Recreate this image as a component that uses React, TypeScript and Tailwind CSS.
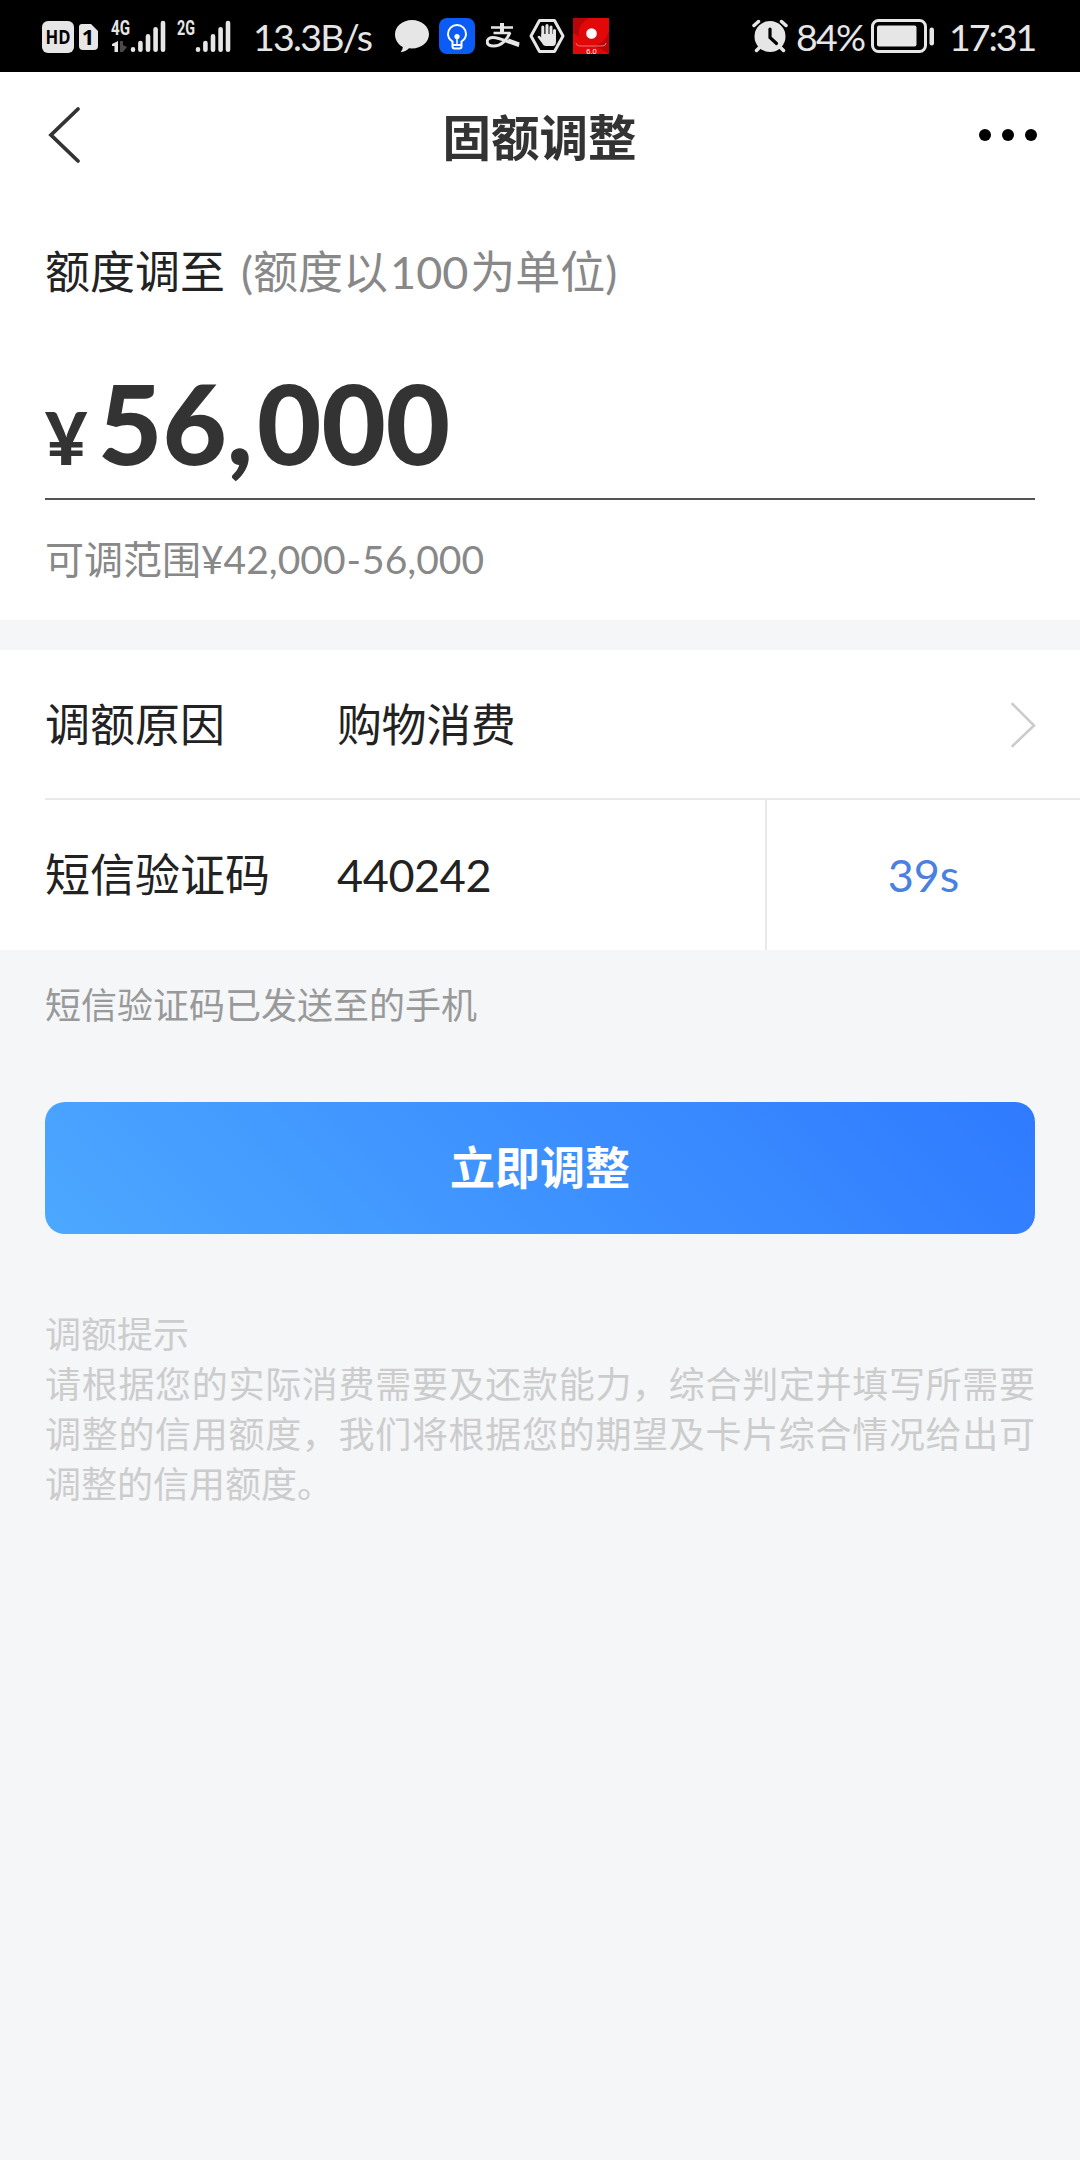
import type { ReactNode } from "react";

const SignalBars = () => (
  <svg width="36" height="36" viewBox="0 0 36 36" stroke="#e6e6e6" strokeWidth="4.6" strokeLinecap="round">
    <path d="M3 31.4v.4M10.4 25v6.8M18 18.4v13.4M25.6 11.2v20.6M33 5v26.8" />
  </svg>
);

const StatusBar = () => (
  <header className="flex h-[72px] items-center justify-between bg-black pl-[42px] pr-[48px] text-[37.5px] leading-none text-[#e6e6e6]">
    <div className="flex items-center">
      <svg width="32" height="32" viewBox="0 0 32 32" className="mt-px overflow-visible">
        <rect width="32" height="32" rx="6" fill="#e6e6e6" />
        <text x="16" y="23" textAnchor="middle" fontFamily="Open Sans" fontSize="19.5" fontWeight="700" textLength="25" lengthAdjust="spacingAndGlyphs">HD</text>
      </svg>
      <svg width="19" height="26" viewBox="0 0 19 26" className="ml-[5px] mt-px overflow-visible">
        <path d="M3 0h9l7 7v15q0 4-4 4H4q-4 0-4-4V3q0-3 3-3z" fill="#e6e6e6" />
        <text x="9" y="21" textAnchor="middle" fontFamily="Open Sans" fontSize="22" fontWeight="700">1</text>
      </svg>
      <svg width="20" height="36" viewBox="0 0 20 36" className="ml-[13px] overflow-visible">
        <text x="0" y="16.5" fontFamily="Roboto" fontSize="21" fontWeight="700" fill="#e6e6e6" textLength="19" lengthAdjust="spacingAndGlyphs">4G</text>
        <path d="M7 23v11H3.500V28H1v-2z" fill="#e6e6e6" />
        <path d="M9 23h3v4l4 2-4 5H9z" fill="#4a4a4a" />
      </svg>
      <div className="-ml-[1px]"><SignalBars /></div>
      <svg width="20" height="36" viewBox="0 0 20 36" className="ml-[11px] overflow-visible">
        <text x="0" y="16.5" fontFamily="Roboto" fontSize="21" fontWeight="700" fill="#e6e6e6" textLength="18" lengthAdjust="spacingAndGlyphs">2G</text>
      </svg>
      <div className="-ml-[2px]"><SignalBars /></div>
      <span className="ml-[22px] w-[142px] whitespace-nowrap pt-[2px] tracking-[-1.7px]">13.3B/s</span>
      <svg width="34" height="33" viewBox="0 0 34 33">
        <path d="M17 0c9.500 0 17 6.500 17 14.300S26.500 28.500 17 28.500l-3-.2c-2 2.200-5 3.800-8.500 3.900 1.300-1.400 2.200-3.200 2.300-5.200C3 24.500 0 19.800 0 14.300 0 6.500 7.500 0 17 0z" fill="#e6e6e6" />
      </svg>
      <svg width="36" height="36" viewBox="0 0 36 36" className="ml-[10px]" fill="none" stroke="#fff">
        <rect width="36" height="36" rx="8" fill="#0b5cf5" stroke="none" />
        <path d="M13.500 25.500v-2C10.500 21.500 9 19 9 16a9 9 0 0 1 18 0c0 3-1.500 5.500-4.500 7.500v5q0 2-2 2h-5q-2 0-2-2zM13.500 27h9" strokeWidth="2" />
        <path d="M18 19v7" strokeWidth="1.500" />
        <circle cx="18" cy="18.500" r="2.600" fill="#fff" stroke="none" />
      </svg>
      <svg width="34" height="26" viewBox="0 0 34 26" className="ml-[11px]" fill="none" stroke="#e6e6e6">
        <path d="M16 0v9" strokeWidth="4" />
        <path d="M5 4.500h22M7.500 10h17" strokeWidth="2.500" />
        <path d="M24 9.500C21 17 15 23 7.500 23 3 23 1.200 21.200 1.200 18.800c0-2.600 2.400-4.200 5.800-4.200 7 0 14 4.400 26 7.900" strokeWidth="3" />
        <path d="M22 17.500 33 21.500" strokeWidth="4" />
      </svg>
      <svg width="36" height="36" viewBox="0 0 36 36" className="ml-[9px]">
        <path d="M10.500 2.500h15L34 18l-8.500 15.500h-15L2 18z" fill="none" stroke="#e6e6e6" strokeWidth="3" strokeLinejoin="round" />
        <path d="M13.800 18V9M18 17V7.500M22 18V9M25.500 20v-7.500" stroke="#e6e6e6" strokeWidth="3" strokeLinecap="round" />
        <path d="M12.300 16h14.700v7.500q0 4.500-3.500 4.500h-6.500c-2 0-3-1-4-3L8.500 19q1.500-2.500 3.800.500z" fill="#e6e6e6" />
      </svg>
      <svg width="36" height="36" viewBox="0 0 36 36" className="ml-[8px] overflow-visible">
        <rect width="36" height="36" fill="#e00808" />
        <path d="M0 0h16Q4 6 6 20 2 14 0 16zM36 36V12q-3 14-16 16 8 2 16 8z" fill="#b80509" />
        <path d="M3 25q0 3 4 3h22q4 0 4-3" fill="none" stroke="#f07070" strokeWidth="1" />
        <circle cx="18.500" cy="15.500" r="5.300" fill="#fff" />
        <text x="18.500" y="35.500" textAnchor="middle" fontFamily="Liberation Sans" fontSize="7.500" fill="#fff">6.0</text>
      </svg>
    </div>
    <div className="flex items-center">
      <svg width="36" height="34" viewBox="0 0 36 34" stroke="#e6e6e6" strokeLinecap="round" fill="none">
        <circle cx="18" cy="17.500" r="15.500" fill="#e6e6e6" stroke="none" />
        <path d="M2 6.500 6.500 2.500M34 6.500 29.500 2.500M4.500 31.500 8 28M31.500 31.500 28 28" strokeWidth="3.500" />
        <path d="M18 10v8.500l6.500 6" stroke="#000" strokeWidth="3.200" />
      </svg>
      <span className="ml-[8px] w-[74px] whitespace-nowrap pt-[2px] tracking-[-1.8px]">84%</span>
      <svg width="64" height="34" viewBox="0 0 64 34" className="ml-px">
        <rect x="1.500" y="1.500" width="53" height="31" rx="6" fill="none" stroke="#e6e6e6" strokeWidth="3" />
        <rect x="6" y="6.500" width="39.500" height="21" rx="2" fill="#e6e6e6" />
        <rect x="58.500" y="8.500" width="4.500" height="18" rx="2.200" fill="#e6e6e6" />
      </svg>
      <span className="ml-[14px] w-[83px] whitespace-nowrap pt-[2px] tracking-[-2px]">17:31</span>
    </div>
  </header>
);

const NavBar = () => (
  <nav className="flex h-[130px] items-center justify-between pl-[47px] pr-[42px] text-[#333]">
    <svg width="54" height="58" viewBox="0 0 54 58" className="-mt-[5px]" fill="none" stroke="#333" strokeWidth="3.800" strokeLinecap="round">
      <path d="M31 3 4 29 31 55" />
    </svg>
    <h1 className="text-[48.5px] font-bold leading-none">固额调整</h1>
    <svg width="60" height="12" viewBox="0 0 60 12" className="-mt-[4px]" fill="#000">
      <circle cx="7" cy="6" r="6" />
      <circle cx="30" cy="6" r="6" />
      <circle cx="53" cy="6" r="6" />
    </svg>
  </nav>
);

const Row = ({ label, value, children }: { label: string; value: string; children: ReactNode }) => (
  <div className="flex h-full items-center">
    <span className="w-[292px]">{label}</span>
    <span className="flex-1 tracking-[-0.4px]">{value}</span>
    {children}
  </div>
);

const App = () => {
  return (
    <div className="min-h-[2160px] w-[1080px] bg-[#f4f6f8] font-['Lato','Noto_Sans_CJK_SC',sans-serif]" lang="zh-CN">
      <StatusBar />

      <section className="h-[548px] bg-white">
        <NavBar />
        <div className="px-[45px]">
          <div className="flex h-[140px] items-center gap-[16px] text-[45px] leading-none">
            <span className="text-[#222]">额度调至</span>
            <span className="text-[#888]">(额度以<span className="mx-[2px]">100</span>为单位)</span>
          </div>
          <div className="flex h-[158px] items-baseline border-b-2 border-[#555] text-[#333]">
            <span className="w-[53px] text-[73px] font-black leading-none">¥</span>
            <span className="text-[111px] font-black leading-[160px]">56<span className="mr-[4px]">,</span>000</span>
          </div>
          <p className="mt-[39px] text-[39px] leading-[40px] text-[#888]">可调范围¥42,000<span className="mx-[1px]">-</span>56,000</p>
        </div>
      </section>

      <section className="mt-[30px] bg-white pl-[45px] text-[45px] leading-none text-[#222]">
        <div className="h-[150px] border-b-2 border-[#e9e9e9] pt-[2px]">
          <Row label="调额原因" value="购物消费">
            <svg width="26" height="48" viewBox="0 0 26 48" className="mr-[44px]" fill="none" stroke="#ccc" strokeWidth="2.600" strokeLinecap="round">
              <path d="M2.500 3 24 24.500 2.500 45" />
            </svg>
          </Row>
        </div>
        <div className="h-[150px]">
          <Row label="短信验证码" value="440242">
            <div className="flex h-full w-[315px] items-center justify-center border-l-2 border-[#e9e9e9] text-[#4a80df]">39s</div>
          </Row>
        </div>
      </section>

      <section className="px-[45px] text-[36px]">
        <p className="pt-[30px] leading-[50px] text-[#999]">短信验证码已发送至的手机</p>
        <button className="mt-[72px] block h-[132px] w-full rounded-[20px] bg-[linear-gradient(45deg,#4ca8ff,#2f7aff)] pt-[2px] text-[45px] font-bold text-white">
          立即调整
        </button>
        <div className="mt-[75px] text-justify leading-[50px] text-[#ccc]">
          <p>调额提示</p>
          <p>请根据您的实际消费需要及还款能力，综合判定并填写所需要调整的信用额度，我们将根据您的期望及卡片综合情况给出可调整的信用额度。</p>
        </div>
      </section>
    </div>
  );
};

export default App;
